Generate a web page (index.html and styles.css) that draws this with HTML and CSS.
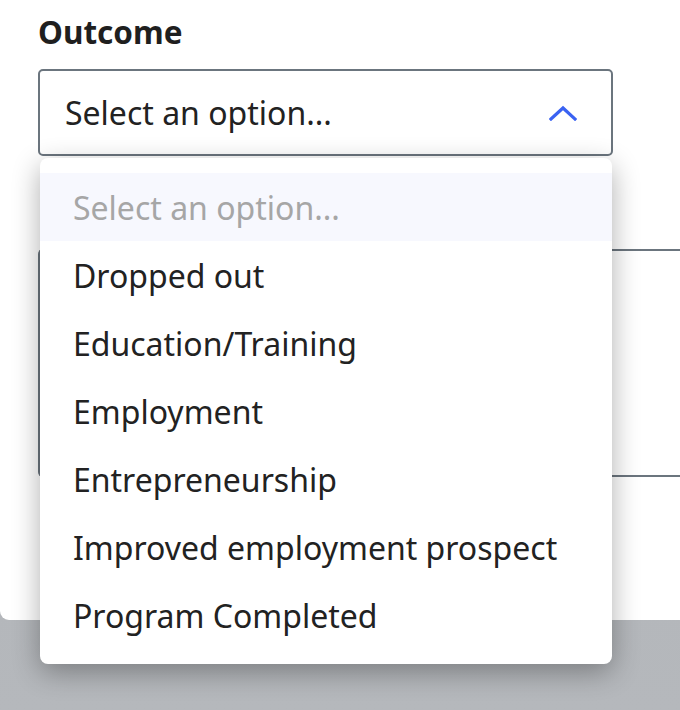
FILE: index.html
```html
<!DOCTYPE html>
<html lang="en">
<head>
<meta charset="utf-8">
<title>Outcome</title>
<link rel="stylesheet" href="styles.css">
</head>
<body>
<div class="panel">
  <div class="label">Outcome</div>
  <div class="field">
    <div class="select">
      <span class="value">Select an option...</span>
      <svg class="chevron" width="28" height="16" viewBox="0 0 28 16"><path d="M2 14 L14 3 L26 14" fill="none" stroke="#3a62f2" stroke-width="3.2" stroke-linecap="square"/></svg>
    </div>
    <ul class="menu">
      <li class="option placeholder">Select an option...</li>
      <li class="option">Dropped out</li>
      <li class="option">Education/Training</li>
      <li class="option">Employment</li>
      <li class="option">Entrepreneurship</li>
      <li class="option">Improved employment prospect</li>
      <li class="option">Program Completed</li>
    </ul>
  </div>
  <div class="textarea"></div>
</div>
</body>
</html>
```
FILE: styles.css
```css
html, body {
  margin: 0;
  padding: 0;
}
body {
  width: 680px;
  height: 710px;
  overflow: hidden;
  background: linear-gradient(180deg, #a3a6aa 0%, #b1b4b8 40%, #b5b8bc 100%);
  font-family: "Noto Sans", "Open Sans", sans-serif;
  color: #222222;
}
.panel {
  width: 680px;
  height: 620px;
  background: #ffffff;
  border-bottom-left-radius: 9px;
  box-sizing: border-box;
  padding: 12px 0 0 38px;
}
.label {
  font-size: 31.5px;
  font-weight: 700;
  line-height: 40px;
  color: #1f1f1f;
  margin-bottom: 17px;
}
.field {
  position: relative;
  width: 575px;
}
.select {
  height: 87px;
  box-sizing: border-box;
  border: 2px solid #6b757e;
  border-radius: 5px;
  display: flex;
  align-items: center;
  justify-content: space-between;
  padding: 0 34px 0 25px;
  font-size: 32px;
  color: #222222;
}
.chevron {
  display: block;
}
.menu {
  position: absolute;
  top: 89px;
  left: 2px;
  width: 572px;
  margin: 0;
  padding: 15px 0;
  list-style: none;
  background: #ffffff;
  border-radius: 8px;
  box-shadow: 0 8px 28px rgba(0, 0, 0, 0.32);
  box-sizing: border-box;
  z-index: 2;
}
.option {
  height: 68px;
  display: flex;
  align-items: center;
  padding-left: 33px;
  font-size: 32px;
  color: #222222;
}
.option.placeholder {
  background: #f7f8fe;
  color: #a6a6a6;
}
.textarea {
  margin-top: 93px;
  height: 228px;
  box-sizing: border-box;
  border: 2px solid #6b757e;
  border-right: none;
  border-radius: 5px 0 0 5px;
}
```
